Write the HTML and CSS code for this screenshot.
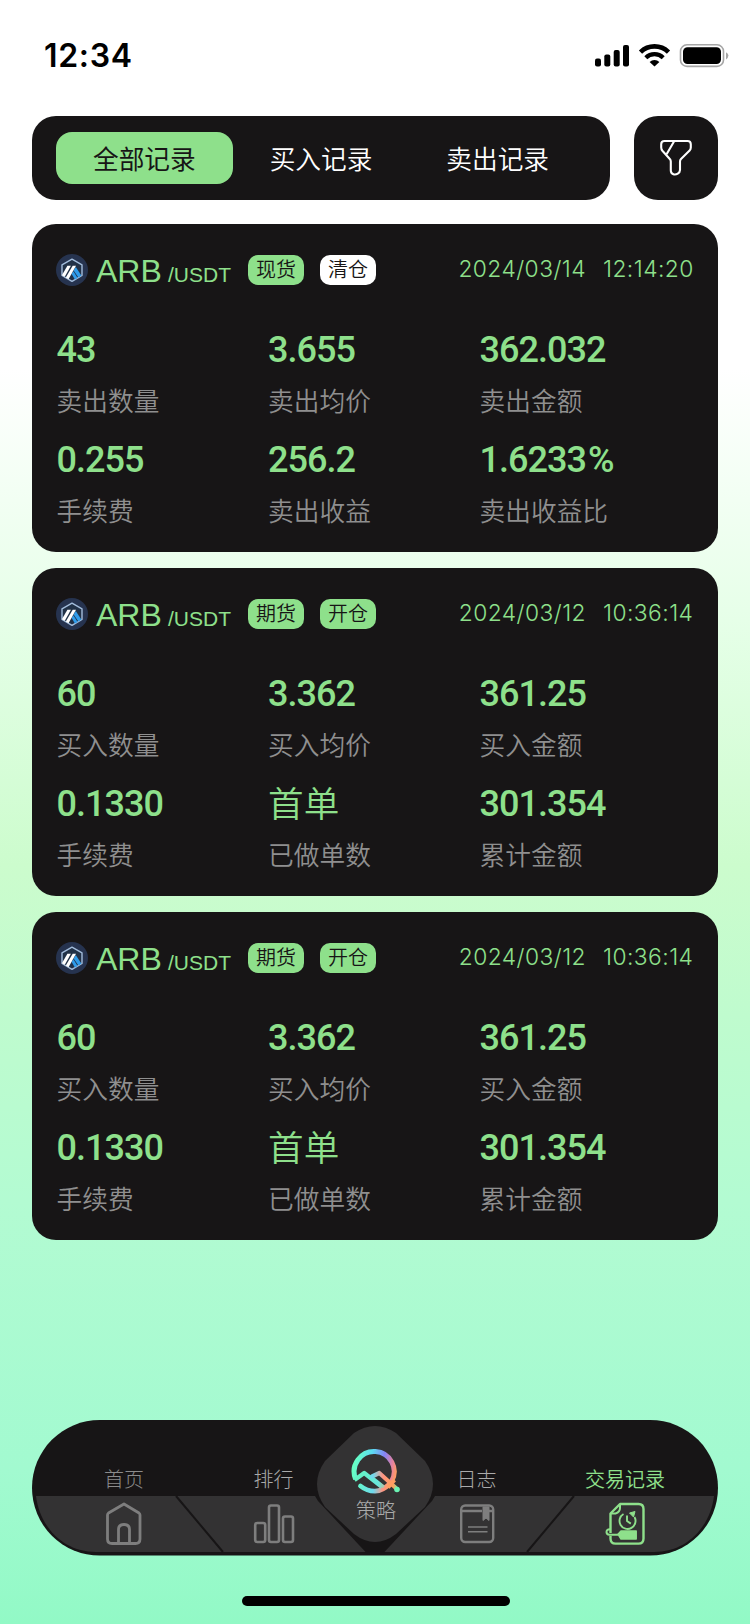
FILE: index.html
```
<!DOCTYPE html>
<html lang="zh-CN">
<head>
  <meta charset="UTF-8" />
  <meta name="viewport" content="width=device-width, initial-scale=1" />
  <title>交易记录</title>
  <link rel="stylesheet" href="styles.css">
</head>
<body>

  <!-- shared icons -->
  <svg class="sprite" width="0" height="0">
    <symbol id="arb" viewBox="0 0 32 32">
      <circle cx="16" cy="16" r="16" fill="#26334f" />
      <path d="M16 5.2 L26 10.8 V21.5 L16 27.4 L6 21.5 V10.8 Z" fill="#213147" stroke="#a3bddc" stroke-width="1.4" stroke-linejoin="round" />
      <path d="M17.6 16.5 L19.8 13 L25.3 21.6 L22.4 23.4 Z" fill="#2f9bea" />
      <path d="M15.7 20 L17.3 17.2 L21.6 24 L18.9 25.6 Z" fill="#2f9bea" />
      <path d="M11.4 11.8 H14.9 L8.8 22.8 L5.9 21.3 Z" fill="#fff" />
      <path d="M16.7 11.8 H20 L12.5 25.2 L9.8 23.6 Z" fill="#fff" />
    </symbol>
  </svg>

  <header class="status-bar">
    <div class="time">12:34</div>
    <svg width="136" height="26" viewBox="0 0 136 26">
      <rect x="0" y="15.5" width="6" height="8" rx="2" />
      <rect x="9.3" y="11.5" width="6" height="12" rx="2" />
      <rect x="18.7" y="7" width="6" height="16.5" rx="2" />
      <rect x="28" y="2" width="6" height="21.5" rx="2" />
      <path d="M45.5 9.1 A20 20 0 0 1 73.5 9.1" fill="none" stroke="#000" stroke-width="4.6" />
      <path d="M50.8 14.7 A12.4 12.4 0 0 1 68.2 14.7" fill="none" stroke="#000" stroke-width="4.2" />
      <path d="M54.6 18.9 A7.2 7.2 0 0 1 64.4 18.9 L59.5 23.6 Z" />
      <rect x="85.5" y="1.8" width="43" height="21.6" rx="6.5" fill="none" stroke="#a6a6a6" stroke-width="1.6" />
      <rect x="88" y="4.2" width="38" height="16.8" rx="4.5" />
      <path d="M131 9.2 Q133.4 10.4 133.4 12.6 Q133.4 15 131 16.4 Z" fill="#a6a6a6" />
    </svg>
  </header>

  <div class="toolbar">
    <div class="tabs">
      <div class="tab active">全部记录</div>
      <div class="tab">买入记录</div>
      <div class="tab">卖出记录</div>
    </div>
    <div class="filter">
      <svg width="34" height="38" viewBox="0 0 34 38" fill="none" stroke="#fff" stroke-width="2.1" stroke-linejoin="round" stroke-linecap="round">
        <path d="M5.5 2 H28.5 Q31.8 2 31.8 5.3 V8.6 Q31.8 10.3 30.6 11.6 L22 20 Q21 21.1 21 22.6 V31 Q21 33.3 18.8 34.6 Q16.4 36 14.4 35.2 Q11.8 34.2 11.8 31.4 V22.6 Q11.8 21.1 10.8 20 L3.4 11.8 Q2.2 10.4 2.2 8.6 V5.3 Q2.2 2 5.5 2 Z" />
        <path d="M15 2.4 L8 14.6" />
      </svg>
    </div>
  </div>

  <main class="records">
    <section class="card">
      <div class="card-head">
        <svg class="coin" width="32" height="32"><use href="#arb" /></svg>
        <span class="symbol">ARB</span>
        <span class="quote">/USDT</span>
        <span class="tag">现货</span>
        <span class="tag white">清仓</span>
        <span class="date">2024/03/14</span>
        <span class="clock">12:14:20</span>
      </div>
      <div class="grid">
        <div class="item"><b>43</b><span>卖出数量</span></div>
        <div class="item"><b>3.655</b><span>卖出均价</span></div>
        <div class="item"><b>362.032</b><span>卖出金额</span></div>
        <div class="item"><b>0.255</b><span>手续费</span></div>
        <div class="item"><b>256.2</b><span>卖出收益</span></div>
        <div class="item"><b>1.6233<i>%</i></b><span>卖出收益比</span></div>
      </div>
    </section>

    <section class="card">
      <div class="card-head">
        <svg class="coin" width="32" height="32"><use href="#arb" /></svg>
        <span class="symbol">ARB</span>
        <span class="quote">/USDT</span>
        <span class="tag">期货</span>
        <span class="tag">开仓</span>
        <span class="date">2024/03/12</span>
        <span class="clock">10:36:14</span>
      </div>
      <div class="grid">
        <div class="item"><b>60</b><span>买入数量</span></div>
        <div class="item"><b>3.362</b><span>买入均价</span></div>
        <div class="item"><b>361.25</b><span>买入金额</span></div>
        <div class="item"><b>0.1330</b><span>手续费</span></div>
        <div class="item"><b class="cn">首单</b><span>已做单数</span></div>
        <div class="item"><b>301.354</b><span>累计金额</span></div>
      </div>
    </section>

    <section class="card">
      <div class="card-head">
        <svg class="coin" width="32" height="32"><use href="#arb" /></svg>
        <span class="symbol">ARB</span>
        <span class="quote">/USDT</span>
        <span class="tag">期货</span>
        <span class="tag">开仓</span>
        <span class="date">2024/03/12</span>
        <span class="clock">10:36:14</span>
      </div>
      <div class="grid">
        <div class="item"><b>60</b><span>买入数量</span></div>
        <div class="item"><b>3.362</b><span>买入均价</span></div>
        <div class="item"><b>361.25</b><span>买入金额</span></div>
        <div class="item"><b>0.1330</b><span>手续费</span></div>
        <div class="item"><b class="cn">首单</b><span>已做单数</span></div>
        <div class="item"><b>301.354</b><span>累计金额</span></div>
      </div>
    </section>
  </main>

  <nav class="nav">
    <!-- bar background: grey lower band, dividers, centre diamond -->
    <svg class="nav-bg" width="686" height="136" viewBox="0 0 686 136">
      <rect width="686" height="135.6" rx="67.8" fill="#171516" />
      <path d="M4 76 H682 C678 108 654 132 622 132 H64 C32 132 8 108 4 76 Z" fill="#333233" />
      <path d="M144 76 L191 132 M542 76 L495 132" stroke="#171516" stroke-width="2" />
      <path d="M283 76 L286 81 L334 132.5 H352 L400 81 L403 76 Z" fill="#171516" />
      <path d="M322 13 Q343 -1 364 13 L393 41 Q409 64 393 87 L364 114 Q343 130 322 114 L293 87 Q277 64 293 41 Z" fill="#333233" />
    </svg>

    <a class="nav-item home">
      <span>首页</span>
      <svg width="42" height="44" viewBox="0 0 42 44" fill="none" stroke="#7e7e7e" stroke-width="2.8" stroke-linejoin="round">
        <path d="M21 3 L36 12 Q37 12.8 37 14 V38 Q37 42.5 32.5 42.5 H9 Q4.5 42.5 4.5 38 V14 Q4.5 12.8 5.5 12 Z" />
        <path d="M15.5 42 V28.5 Q15.5 23.5 21 23.5 Q26.5 23.5 26.5 28.5 V42" />
      </svg>
    </a>
    <a class="nav-item rank">
      <span>排行</span>
      <svg width="42" height="44" viewBox="0 0 42 44" fill="none" stroke="#7e7e7e" stroke-width="2.6">
        <rect x="2.2" y="22" width="10" height="19" rx="2" />
        <rect x="16" y="4.5" width="10" height="36.5" rx="2" />
        <rect x="30" y="15.5" width="10" height="25.5" rx="2" />
      </svg>
    </a>
    <a class="nav-item plan">
      <svg width="50" height="46" viewBox="0 0 50 46" fill="none">
        <defs>
          <linearGradient id="ring" x1="2" y1="24" x2="44" y2="32" gradientUnits="userSpaceOnUse">
            <stop offset="0" stop-color="#66ffc4" />
            <stop offset=".35" stop-color="#5cdcf2" />
            <stop offset=".65" stop-color="#8583f5" />
            <stop offset=".88" stop-color="#e8829b" />
            <stop offset="1" stop-color="#ff9d61" />
          </linearGradient>
          <linearGradient id="tail" x1="8" y1="0" x2="48" y2="0" gradientUnits="userSpaceOnUse">
            <stop offset="0" stop-color="#63f5cb" />
            <stop offset=".35" stop-color="#6fd8ee" />
            <stop offset=".6" stop-color="#ff9380" />
            <stop offset=".85" stop-color="#ffa35a" />
            <stop offset="1" stop-color="#72efb2" />
          </linearGradient>
          <linearGradient id="peak" x1="4" y1="26" x2="40" y2="40" gradientUnits="userSpaceOnUse">
            <stop offset="0" stop-color="#63f5c0" />
            <stop offset=".65" stop-color="#69e6dc" />
            <stop offset="1" stop-color="#ff9d70" />
          </linearGradient>
        </defs>
        <path d="M4.6 31 A20 20 0 1 1 40.5 33.5" stroke="url(#ring)" stroke-width="5" />
        <path d="M9.5 38 Q16 43.3 24 43.2 Q32 42.5 38 36.5" stroke="url(#tail)" stroke-width="4.8" stroke-linecap="round" />
        <path d="M3.5 32 L13.2 25 L31 39" stroke="url(#peak)" stroke-width="4.2" stroke-linejoin="round" />
        <path d="M21 29.5 L33 39" stroke="url(#peak)" stroke-width="3" />
        <path d="M21 28.5 L28.3 25 L46 41" stroke="url(#tail)" stroke-width="4.2" stroke-linejoin="round" stroke-linecap="round" />
        <path d="M37 39.5 L43.5 32" stroke="#ff9d61" stroke-width="4" />
        <circle cx="46" cy="41.5" r="2.8" fill="#6bf3b4" />
      </svg>
      <span>策略</span>
    </a>
    <a class="nav-item log">
      <span>日志</span>
      <svg width="42" height="44" viewBox="0 0 42 44" fill="none" stroke="#7e7e7e" stroke-width="2.4">
        <rect x="5.2" y="4.5" width="32" height="36.5" rx="4" />
        <path d="M5.5 10 H26 M32.5 10 H37" />
        <path d="M27 6 H33 V19.5 L30 17 L27 19.5 Z" fill="#7e7e7e" stroke-width="1" />
        <path d="M12 26 H31.5 M12 30.8 H31.5" stroke-width="1.6" />
      </svg>
    </a>
    <a class="nav-item trade active">
      <span>交易记录</span>
      <svg width="42" height="44" viewBox="0 0 42 44" fill="none" stroke="#8ee08b" stroke-width="2.4" stroke-linejoin="round">
        <path d="M6.5 32 V12.5 L16 3 H34.5 Q39.5 3 39.5 8 V37.5 Q39.5 42.6 34.5 42.6 H11.5 Q6.5 42.6 6.5 37.5 V35" />
        <path d="M7 12.5 H11.5 Q16 11 16 7 V4" stroke-width="2" />
        <path d="M19.5 13 A8 8 0 1 0 30.5 16" stroke-width="1.9" />
        <path d="M25.5 12 L31 10.5 L29.5 16 Z" fill="#8ee08b" stroke-width="1" />
        <path d="M23 14.5 V20 L26.8 22.6" stroke-width="1.9" />
        <path d="M14 33.2 L17 30 H32.2 V38 H17 Z" fill="#8ee08b" stroke-width="1.5" />
        <path d="M14 33.8 H5.5 Q2.5 33.5 2.5 31 Q2.5 28 6.5 28.4" stroke-width="2" />
      </svg>
    </a>
  </nav>

  <div class="home-indicator"></div>

</body>
</html>
```
FILE: styles.css
```
* {
  box-sizing: border-box;
}
body {
  margin: 0;
  width: 750px;
  height: 1624px;
  display: flex;
  flex-direction: column;
  font-family: "Noto Sans CJK SC", sans-serif;
  background: linear-gradient(180deg, #fff 0, #fff 370px, #e6ffe8 620px, #ccfccd 865px, #bffbce 1015px, #b3fbd2 1200px, #a2fad0 1470px, #92f9c6 1624px);
  overflow: hidden;
}
.sprite {
  position: absolute;
}
.status-bar {
  height: 116px;
  flex: none;
  display: flex;
  align-items: flex-start;
  justify-content: space-between;
  padding: 43px 19px 0 44px;
}
.time {
  padding-top: 1px;
  font-family: Inter, sans-serif;
  font-size: 32px;
  font-weight: 600;
  line-height: 24px;
  letter-spacing: 0.7px;
}
.toolbar {
  display: flex;
  gap: 24px;
  padding: 0 32px;
}
.tabs {
  flex: 1;
  min-width: 0;
  height: 84px;
  padding: 16px 24px;
  display: flex;
  background: #171516;
  border-radius: 24px;
}
.tab {
  flex: 1;
  height: 52px;
  line-height: 52px;
  text-align: center;
  font-size: 25.7px;
  font-weight: 350;
  color: #fff;
  border-radius: 16px;
}
.tab.active {
  background: #8ee08b;
  color: #171516;
  font-weight: 400;
}
.filter {
  flex: none;
  width: 84px;
  height: 84px;
  display: flex;
  align-items: center;
  justify-content: center;
  background: #171516;
  border-radius: 24px;
}
.records {
  display: flex;
  flex-direction: column;
  gap: 16px;
  padding: 24px 32px 0;
}
.card {
  height: 328px;
  padding: 30px 24px 0;
  background: #171516;
  border-radius: 24px;
}
.card-head {
  display: flex;
  align-items: center;
  height: 32px;
  color: #8ee08b;
}
.symbol {
  width: 64px;
  margin: 2px 0 0 8px;
  font: 32px/32px "Liberation Sans", sans-serif;
}
.quote {
  width: 64px;
  margin: 9px 16px 0 8px;
  font: 21px/24px "Liberation Sans", sans-serif;
}
.tag {
  width: 56px;
  height: 30px;
  margin-right: 16px;
  line-height: 28px;
  text-align: center;
  font-size: 20px;
  font-weight: 350;
  color: #171516;
  background: #8ee08b;
  border-radius: 10px;
}
.tag.white {
  background: #fff;
}
.date,
.clock {
  font: 300 22.8px/26px Inter, sans-serif;
  letter-spacing: 0.45px;
  margin-top: -2px;
  white-space: nowrap;
}
.date {
  margin-left: auto;
}
.clock {
  width: 91px;
  margin-left: 17px;
}
.grid {
  display: grid;
  grid-template-columns: 211.5px 211.5px 1fr;
  row-gap: 18px;
  margin-top: 42px;
  padding-left: 0.6px;
}
.item b {
  display: block;
  height: 44px;
  font: 500 36px/44px Roboto, sans-serif;
  letter-spacing: -1px;
  color: #8ee08b;
}
.item b i {
  margin-left: 2px;
  font-style: normal;
}
.item b.cn {
  font: 350 35.6px/40px "Noto Sans CJK SC", sans-serif;
  letter-spacing: 0;
}
.item span {
  display: block;
  height: 36px;
  margin-top: 12px;
  line-height: 32px;
  font-size: 25.7px;
  font-weight: 350;
  color: #8f8f8f;
}
.nav {
  position: relative;
  display: flex;
  width: 686px;
  height: 136px;
  margin: 180px 32px 0;
  flex: none;
}
.nav-bg {
  position: absolute;
  left: 0;
  top: 0;
}
.nav-item {
  position: relative;
  display: flex;
  flex-direction: column;
  align-items: center;
  padding-top: 44px;
  font-size: 20px;
  font-weight: 300;
  line-height: 30px;
  color: #aaa;
}
.nav-item svg {
  margin-top: 7px;
}
.home {
  width: 184px;
  color: #8b8b8b;
}
.rank {
  width: 115px;
}
.plan {
  width: 90px;
  padding-top: 20px;
}
.plan svg {
  margin-top: 8px;
}
.plan span {
  margin-top: 1px;
}
.log {
  width: 111px;
}
.trade {
  width: 186px;
}
.nav-item.active {
  color: #8ee08b;
  font-weight: 350;
}
.home-indicator {
  width: 268px;
  height: 10px;
  margin: 40px 0 0 242px;
  background: #000;
  border-radius: 5px;
}
```
